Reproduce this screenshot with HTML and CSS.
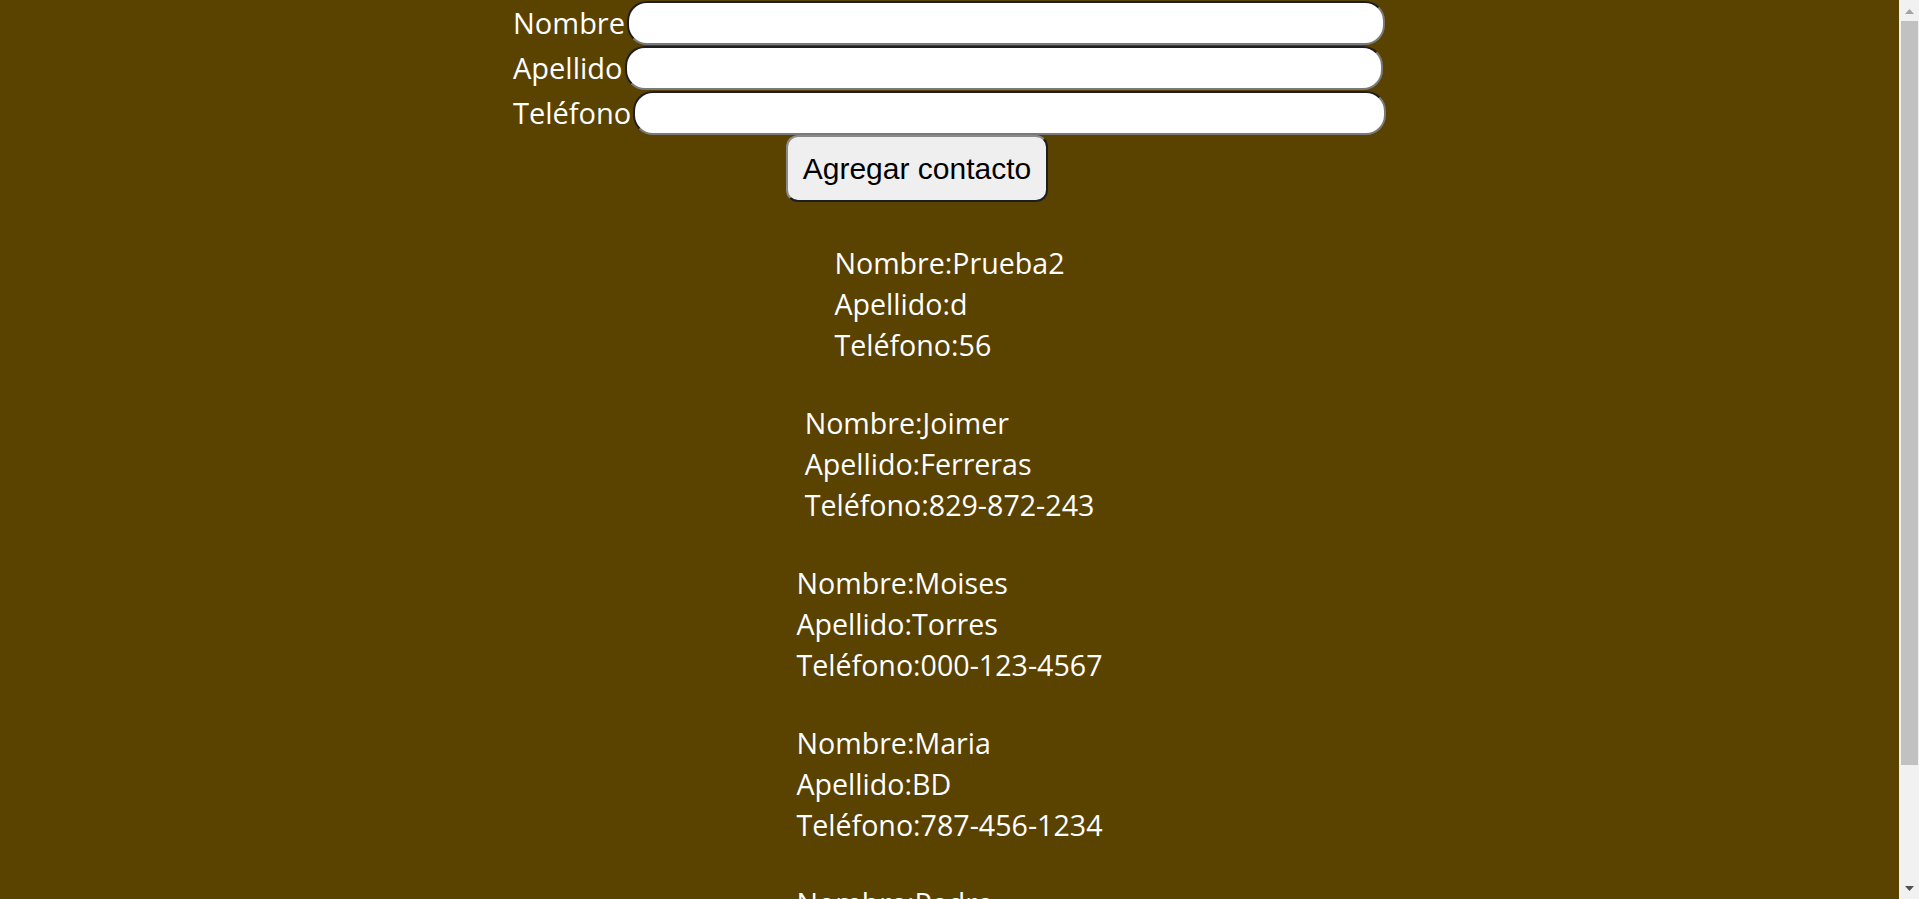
FILE: index.html
```html
<!DOCTYPE html>
<html lang="es">
<head>
<meta charset="utf-8">
<title>Agenda de contactos</title>
<link rel="stylesheet" href="styles.css">
</head>
<body>
  <main class="page">
    <form class="form">
      <div class="row">
        <label class="label" for="nombre">Nombre</label><input class="field" id="nombre" type="text">
      </div>
      <div class="row">
        <label class="label" for="apellido">Apellido</label><input class="field" id="apellido" type="text">
      </div>
      <div class="row">
        <label class="label" for="telefono">Teléfono</label><input class="field" id="telefono" type="text">
      </div>
      <button class="btn" type="button">Agregar contacto</button>
    </form>
    <div class="contacts">
      <div class="contact">
        <div>Nombre:Prueba2</div>
        <div>Apellido:d</div>
        <div>Teléfono:56</div>
      </div>
      <div class="contact">
        <div>Nombre:Joimer</div>
        <div>Apellido:Ferreras</div>
        <div>Teléfono:829-872-243</div>
      </div>
      <div class="contact">
        <div>Nombre:Moises</div>
        <div>Apellido:Torres</div>
        <div>Teléfono:000-123-4567</div>
      </div>
      <div class="contact">
        <div>Nombre:Maria</div>
        <div>Apellido:BD</div>
        <div>Teléfono:787-456-1234</div>
      </div>
      <div class="contact">
        <div>Nombre:Pedro</div>
        <div>Apellido:Perez</div>
        <div>Teléfono:809-555-1234</div>
      </div>
    </div>
  </main>
  <aside class="scrollbar" aria-hidden="true">
    <div class="sb-btn">
      <svg width="9" height="5" viewBox="0 0 9 5"><path d="M4.5 0 L9 5 L0 5 Z" fill="#a3a3a3"/></svg>
    </div>
    <div class="sb-thumb"></div>
    <div class="sb-space"></div>
    <div class="sb-btn sb-btn-down">
      <svg width="9" height="5" viewBox="0 0 9 5"><path d="M0 0 L9 0 L4.5 5 Z" fill="#505050"/></svg>
    </div>
  </aside>
</body>
</html>
```
FILE: styles.css
```css
html {
  background: #5a4200;
}
body {
  margin: 0;
  background: #5a4200;
  color: #ffffff;
  font-family: "Open Sans", "Noto Sans", sans-serif;
}
.page {
  margin-right: 20px;
}
.form {
  width: 873px;
  margin: 0 auto;
}
.row {
  display: flex;
  align-items: center;
  height: 45px;
}
.label {
  font-size: 29px;
  line-height: 40px;
  white-space: nowrap;
}
.field {
  box-sizing: border-box;
  width: 758px;
  height: 44px;
  margin: 0 0 0 2px;
  padding: 0 18px;
  background: #ffffff;
  border: 2px solid;
  border-color: #1e1e1e #7a7a7a #7a7a7a #1e1e1e;
  border-radius: 20px;
  font-size: 20px;
}
.btn {
  display: block;
  box-sizing: border-box;
  width: 262px;
  height: 67px;
  margin: 0 0 0 273px;
  padding: 0;
  background: #efefef;
  color: #000000;
  border: 2px solid;
  border-color: #8a8a8a #1e1e1e #1e1e1e #8a8a8a;
  border-radius: 12px;
  font-family: "Liberation Sans", Arial, sans-serif;
  font-size: 30px;
}
.contacts {
  margin-top: 40px;
}
.contact {
  width: fit-content;
  margin: 0 auto 37px;
  font-size: 28.6px;
  line-height: 41px;
  white-space: nowrap;
}

/* window scrollbar as drawn in the screenshot */
.scrollbar {
  position: fixed;
  top: 0;
  right: 0;
  width: 20px;
  height: 100vh;
  background: #f1f1f1;
  display: flex;
  flex-direction: column;
}
.sb-btn {
  height: 21px;
  display: flex;
  justify-content: flex-start;
  align-items: flex-start;
  padding: 9px 0 0 6px;
  box-sizing: border-box;
}
.sb-btn svg {
  display: block;
}
.sb-btn-down {
  height: 20px;
  padding-top: 7px;
}
.sb-thumb {
  height: 744px;
  margin: 0 1px 0 2px;
  background: #c1c1c1;
}
.sb-space {
  flex: 1;
}
```
